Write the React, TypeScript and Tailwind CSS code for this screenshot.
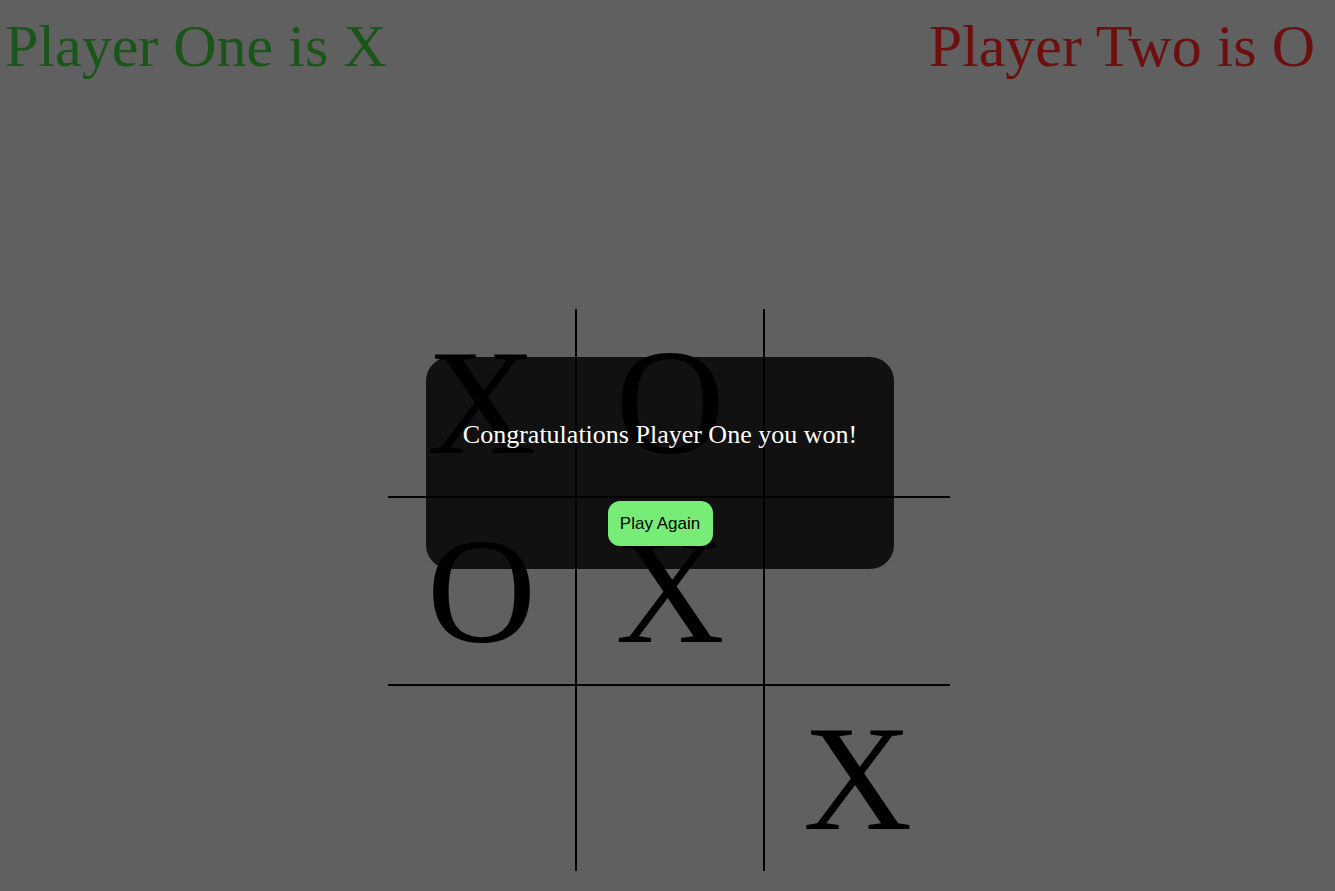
import React from 'react';

type Mark = 'X' | 'O' | '';

const board: Mark[][] = [
  ['X', 'O', ''],
  ['O', 'X', ''],
  ['', '', 'X'],
];

const colClass = ['w-[189px] border-r-2', 'w-[188px] border-r-2', 'w-[185px]'];
const rowClass = ['h-[189px] border-b-2', 'h-[188px] border-b-2', 'h-[185px]'];

const Cell: React.FC<{ mark: Mark; row: number; col: number }> = ({ mark, row, col }) => (
  <div
    className={`${colClass[col]} ${rowClass[row]} border-black flex items-center justify-center text-black text-[151px] leading-none`}
  >
    {mark}
  </div>
);

const App: React.FC = () => {
  return (
    <div
      className="relative w-full h-[891px] bg-[#606060] overflow-hidden"
      style={{ fontFamily: '"Liberation Serif", "Times New Roman", serif' }}
    >
      <header className="flex justify-between pl-[5px] pr-[20px] pt-[12px] text-[60px] leading-[69px]">
        <h1 className="text-[#1a561a]">Player One is X</h1>
        <h1 className="text-[#6b0f0f]">Player Two is O</h1>
      </header>

      <div className="ml-[388px] mt-[228px] flex flex-col w-[562px]">
        {board.map((cells, r) => (
          <div key={r} className="flex">
            {cells.map((mark, c) => (
              <Cell key={c} mark={mark} row={r} col={c} />
            ))}
          </div>
        ))}
      </div>

      <div className="absolute left-[426px] top-[357px] w-[468px] h-[212px] rounded-[24px] bg-[rgba(0,0,0,0.82)] flex flex-col items-center">
        <p className="mt-[63px] text-white text-[26px] leading-[30px]">Congratulations Player One you won!</p>
        <button
          className="mt-[51px] w-[105px] h-[45px] rounded-[12px] bg-[#77ed77] text-black text-[17px]"
          style={{ fontFamily: '"Liberation Sans", Arial, sans-serif' }}
        >
          Play Again
        </button>
      </div>
    </div>
  );
};

export default App;
